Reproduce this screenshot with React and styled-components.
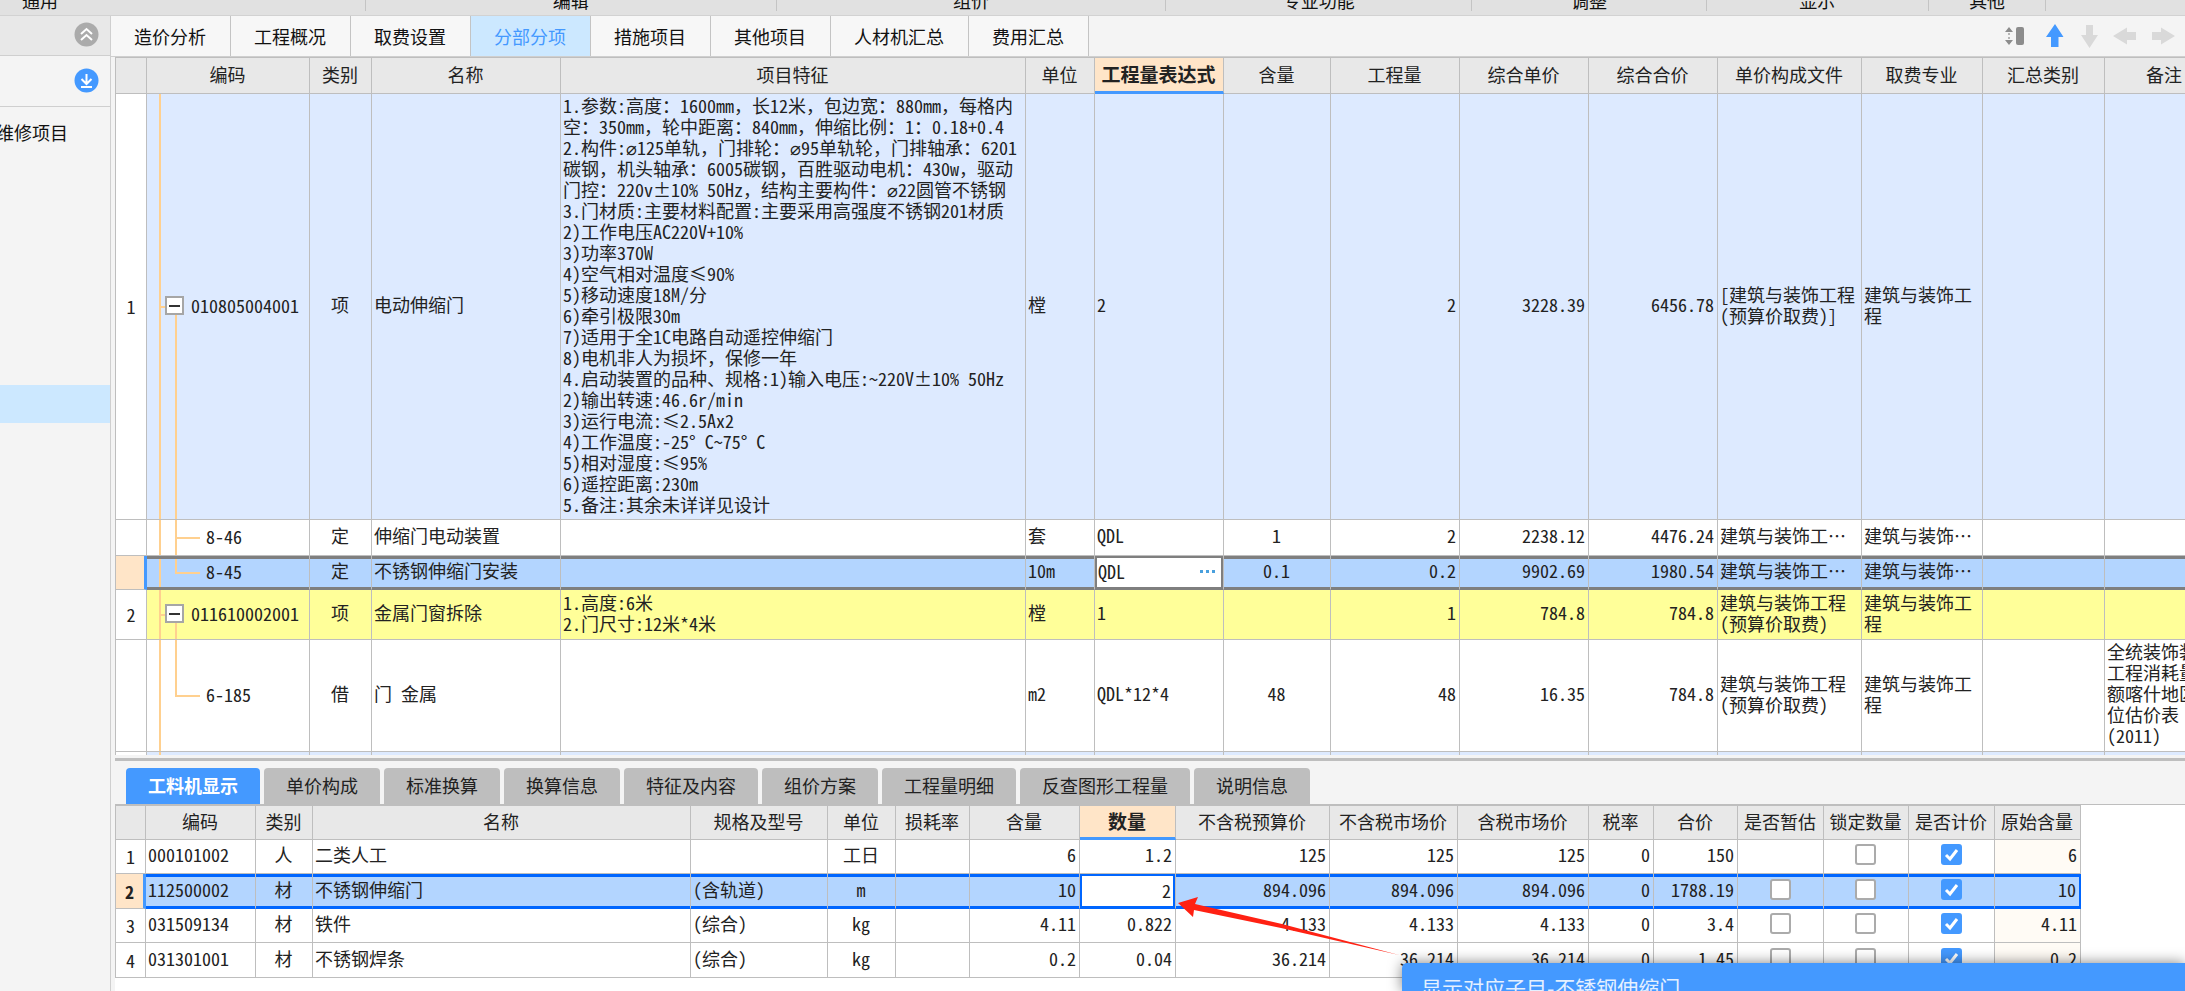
import React from "react";
import styled, { createGlobalStyle, css } from "styled-components";

const GlobalStyle = createGlobalStyle`
  * {
    box-sizing: border-box;
  }
  body {
    margin: 0;
    overflow: hidden;
    background: #f4f4f4;
    color: #222;
    font: 18px/21px "Noto Sans CJK SC", sans-serif;
  }
  button, input {
    font: inherit;
    color: inherit;
  }
`;

const Page = styled.div`
  display: flex;
  flex-direction: column;
  height: 100vh;
`;

const Ribbon = styled.div`
  flex: none;
  display: flex;
  height: 16px;
  overflow: hidden;
  background: #e1e1e1;
  border-bottom: 1px solid #d2d2d2;
`;

const RibbonGroup = styled.div`
  flex: ${(p) => p.$grow} 1 0;
  display: flex;
  align-items: flex-end;
  justify-content: ${(p) => (p.$first ? "flex-start" : "center")};
  min-width: 0;
  height: 11px;
  white-space: nowrap;
  color: #111;
  border-right: 1px solid #c4c4c4;
  &:last-child {
    border-right: none;
  }
  span {
    padding-left: ${(p) => (p.$first ? 22 : 0)}px;
  }
`;

const Body = styled.div`
  flex: 1;
  display: flex;
  min-height: 0;
`;

const Sidebar = styled.aside`
  flex: none;
  width: 111px;
  overflow: hidden;
  background: #f4f4f4;
  border-right: 1px solid #cfcfcf;
`;

const SideBar = styled.div`
  display: flex;
  align-items: center;
  justify-content: flex-end;
  height: ${(p) => (p.$head ? 40 : 51)}px;
  padding: 0 11px 2px 0;
  background: ${(p) => (p.$head ? "#e8e8e8" : "#f4f4f4")};
  border-bottom: 1px solid #cfcfcf;
`;

const RoundButton = styled.button`
  display: flex;
  padding: 0;
  border: none;
  background: none;
`;

const Tree = styled.ul`
  margin: 0;
  padding: 8px 0 0;
  list-style: none;
`;

const TreeItem = styled.li`
  height: 38px;
  line-height: 35px;
  margin-left: -4px;
  white-space: nowrap;
  color: #111;
  background: ${(p) => (p.$active ? "#cce8ff" : "none")};
  &:first-child {
    margin-bottom: 4px;
  }
`;

const Main = styled.main`
  flex: 1;
  display: flex;
  flex-direction: column;
  min-width: 0;
`;

const TopBar = styled.div`
  flex: none;
  display: flex;
  align-items: center;
  justify-content: space-between;
  height: 41px;
  padding-right: 10px;
  border-bottom: 1px solid #cfcfcf;
`;

const TabList = styled.nav`
  display: flex;
  height: 100%;
`;

const Tab = styled.button`
  padding: 0 24px 0 23px;
  border: none;
  border-right: 1px solid #c4c4c4;
  background: ${(p) => (p.$active ? "#cce8ff" : "#f7f7f7")};
  color: ${(p) => (p.$active ? "#49f" : "#111")};
`;

const Tools = styled.div`
  display: flex;
  align-items: center;
  gap: 14px;
`;

const ToolButton = styled.button`
  display: flex;
  padding: 0;
  border: none;
  background: none;
`;

const GridPane = styled.section`
  flex: 1;
  min-height: 0;
  margin: 0 0 3px 4px;
  overflow: hidden;
`;

const Grid = styled.table`
  table-layout: fixed;
  width: ${(p) => p.$width}px;
  border-collapse: separate;
  border-spacing: 0;
  border-left: 1px solid #bebebe;
  border-top: 1px solid #bebebe;
  font-feature-settings: "hwid";
`;

const Th = styled.th`
  height: ${(p) => p.$height}px;
  padding: 0 1px 3px 0;
  font-weight: 400;
  text-align: center;
  white-space: nowrap;
  background: #e8e8e8;
  border-right: 1px solid #bebebe;
  border-bottom: 1px solid #bebebe;
  ${(p) =>
    p.$active &&
    css`
      font-size: 19px;
      font-weight: 700;
      background: #ffe5c8;
      border-bottom: 3px solid #49f;
    `}
`;

const rowColors = {
  item: "#ddeaff",
  sub: "#fff",
  picked: "#b3d5ff",
  marked: "#ffff99",
};

const Td = styled.td`
  padding: 0 3px 4px 2px;
  overflow: hidden;
  text-align: ${(p) => p.$align || "left"};
  white-space: pre;
  background-color: inherit;
  border-right: 1px solid #bebebe;
  border-bottom: 1px solid #bebebe;
`;

const Tr = styled.tr`
  height: ${(p) => p.$height}px;
  background: ${(p) => rowColors[p.$kind]};
  ${(p) =>
    p.$ring &&
    css`
      ${Td} {
        box-shadow: inset 0 3px ${p.$ring}, inset 0 -2px ${p.$ring};
        border-bottom-color: ${p.$ring};
      }
      ${Td}:last-child {
        border-right: 2px solid ${p.$ring};
      }
    `}
`;

const Gutter = styled.th`
  padding: 0;
  font-weight: ${(p) => (p.$bold ? 700 : 400)};
  background: ${(p) => (p.$active ? "#ffe5c8" : "#fff")};
  border-right: ${(p) => (p.$active ? "3px solid #49f" : "1px solid #bebebe")};
  border-bottom: 1px solid #bebebe;
`;

const TextLine = styled.div`
  height: 21px;
`;

// full-width comma keeps its own width next to half-width digits
const Comma = styled.span`
  font-feature-settings: normal;
`;

const line = "linear-gradient(#ffd08f, #ffd08f) no-repeat";
const branch = {
  parent: `${line} 13px 50% / 5px 2px, ${line} 28px 100% / 2px 50%`,
  child: `${line} 28px 50% / 25px 2px, ${line} 28px 0 / 2px 100%`,
  last: `${line} 28px 50% / 25px 2px, ${line} 28px 0 / 2px 50%`,
};

const CodeTd = styled(Td)`
  padding-left: ${(p) => (p.$branch === "parent" ? 18 : 59)}px;
  padding-bottom: 2px;
  background: ${(p) => branch[p.$branch]}, ${line} 12px 0 / 2px 100%;
`;

const CodeBox = styled.div`
  display: flex;
  align-items: center;
  gap: 7px;
`;

const Toggle = styled.button`
  display: flex;
  align-items: center;
  justify-content: center;
  width: 19px;
  height: 19px;
  padding: 0;
  background: #fff;
  border: 2px solid #a6a6a6;
  &::before {
    content: "";
    width: 11px;
    height: 2px;
    background: #333;
  }
`;

const EditTd = styled(Td)`
  padding: 0;
`;

const Editor = styled.div`
  display: flex;
  align-items: center;
  height: ${(p) => p.$height}px;
  padding: 0 2px 2px 1px;
  background: #fff;
  border: 2px solid ${(p) => p.$ring};
`;

const EditInput = styled.input`
  flex: 1;
  min-width: 0;
  padding: 0;
  border: none;
  outline: none;
  background: none;
  font-feature-settings: "hwid";
  text-align: ${(p) => p.$align || "left"};
`;

const MoreButton = styled.button`
  display: flex;
  gap: 3px;
  padding: 4px;
  border: none;
  background: none;
  i {
    width: 3px;
    height: 3px;
    background: #49a0dd;
  }
`;

const DetailPane = styled.section`
  flex: none;
  display: flex;
  flex-direction: column;
  height: 233px;
  margin-left: 4px;
  border-top: 3px solid #bebebe;
`;

const DetailTabs = styled.nav`
  display: flex;
  gap: 4px;
  height: 43px;
  padding: 7px 0 0 11px;
`;

const DetailTab = styled.button`
  height: 36px;
  padding: 0 22px 2px;
  border: none;
  border-radius: 4px 4px 0 0;
  background: ${(p) => (p.$active ? "#49f" : "#bebebe")};
  color: ${(p) => (p.$active ? "#fff" : "#222")};
  font-weight: ${(p) => (p.$active ? 700 : 400)};
`;

const DetailGrid = styled.div`
  flex: 1;
  overflow: hidden;
  background: #fff;
  border-top: 1px solid #bebebe;
`;

const Check = styled.input`
  appearance: none;
  display: block;
  width: 21px;
  height: 21px;
  margin: 0 auto;
  background: #fff;
  border: 2px solid #ababab;
  border-radius: 3px;
  &:checked {
    border-color: #49f;
    background: #49f
      url("data:image/svg+xml,%3Csvg xmlns='http://www.w3.org/2000/svg' viewBox='0 0 17 17'%3E%3Cpath d='M3 9l4 4 7-9' fill='none' stroke='white' stroke-width='3'/%3E%3C/svg%3E");
  }
`;

const Popup = styled.div`
  position: fixed;
  right: 0;
  bottom: 0;
  left: 1402px;
  height: 28px;
  padding: 12px 19px 0;
  overflow: hidden;
  white-space: nowrap;
  font-size: 21px;
  line-height: 24px;
  color: #e4f0ff;
  background: #49f;
  border-top-left-radius: 5px;
`;

const PopupShade = styled.div`
  position: fixed;
  right: 0;
  bottom: 0;
  left: 1402px;
  height: 28px;
  border-top-left-radius: 5px;
  box-shadow: 0 0 14px rgba(0, 0, 0, 0.5);
`;

const Arrow = styled.svg`
  position: fixed;
  left: 1177px;
  bottom: 30px;
`;

const ribbonGroups = [
  ["通用", 366],
  ["编辑", 411],
  ["组价", 390],
  ["专业功能", 306],
  ["调整", 234],
  ["显示", 222],
  ["其他", 117],
  ["", 139],
];

const tabs = [
  "造价分析",
  "工程概况",
  "取费设置",
  "分部分项",
  "措施项目",
  "其他项目",
  "人材机汇总",
  "费用汇总",
];

const columns = [
  ["", 31],
  ["编码", 163],
  ["类别", 62],
  ["名称", 189],
  ["项目特征", 465],
  ["单位", 69],
  ["工程量表达式", 129],
  ["含量", 107],
  ["工程量", 129],
  ["综合单价", 129],
  ["综合合价", 129],
  ["单价构成文件", 144],
  ["取费专业", 121],
  ["汇总类别", 122],
  ["备注", 120],
];

const feature = `1.参数:高度：1600mm，长12米，包边宽：880mm，每格内
空：350mm，轮中距离：840mm，伸缩比例：1：0.18+0.4
2.构件:⌀125单轨，门排轮：⌀95单轨轮，门排轴承：6201
碳钢，机头轴承：6005碳钢，百胜驱动电机：430w，驱动
门控：220v±10% 50Hz，结构主要构件：⌀22圆管不锈钢
3.门材质:主要材料配置:主要采用高强度不锈钢201材质
2)工作电压AC220V+10%
3)功率370W
4)空气相对温度≤90%
5)移动速度18M/分
6)牵引极限30m
7)适用于全1C电路自动遥控伸缩门
8)电机非人为损坏，保修一年
4.启动装置的品种、规格:1)输入电压:~220V±10% 50Hz
2)输出转速:46.6r/min
3)运行电流:≤2.5Ax2
4)工作温度:-25° C~75° C
5)相对湿度:≤95%
6)遥控距离:230m
5.备注:其余未详详见设计`;

const rows = [
  {
    kind: "item",
    height: 426,
    branch: "parent",
    cells: ["1", "010805004001", "项", "电动伸缩门", feature, "樘", "2", "", "2", "3228.39", "6456.78", "[建筑与装饰工程\n(预算价取费)]", "建筑与装饰工\n程", "", ""],
  },
  {
    kind: "sub",
    height: 36,
    branch: "child",
    cells: ["", "8-46", "定", "伸缩门电动装置", "", "套", "QDL", "1", "2", "2238.12", "4476.24", "建筑与装饰工…", "建筑与装饰…", "", ""],
  },
  {
    kind: "picked",
    height: 34,
    branch: "last",
    cells: ["", "8-45", "定", "不锈钢伸缩门安装", "", "10m", "QDL", "0.1", "0.2", "9902.69", "1980.54", "建筑与装饰工…", "建筑与装饰…", "", ""],
  },
  {
    kind: "marked",
    height: 50,
    branch: "parent",
    cells: ["2", "011610002001", "项", "金属门窗拆除", "1.高度:6米\n2.门尺寸:12米*4米", "樘", "1", "", "1", "784.8", "784.8", "建筑与装饰工程\n(预算价取费)", "建筑与装饰工\n程", "", ""],
  },
  {
    kind: "sub",
    height: 112,
    branch: "last",
    cells: ["", "6-185", "借", "门 金属", "", "m2", "QDL*12*4", "48", "48", "16.35", "784.8", "建筑与装饰工程\n(预算价取费)", "建筑与装饰工\n程", "", "全统装饰装修\n工程消耗量定\n额喀什地区单\n位估价表\n(2011)"],
  },
  {
    kind: "item",
    height: 50,
    branch: "parent",
    cells: ["", "", "", "", "", "", "", "", "", "", "", "", "", "", ""],
  },
];

const aligns = { 2: "center", 7: "center", 8: "right", 9: "right", 10: "right" };

const detailTabs = [
  "工料机显示",
  "单价构成",
  "标准换算",
  "换算信息",
  "特征及内容",
  "组价方案",
  "工程量明细",
  "反查图形工程量",
  "说明信息",
];

const detailColumns = [
  ["", 30],
  ["编码", 110],
  ["类别", 57],
  ["名称", 378],
  ["规格及型号", 137],
  ["单位", 68],
  ["损耗率", 74],
  ["含量", 110],
  ["数量", 96],
  ["不含税预算价", 154],
  ["不含税市场价", 128],
  ["含税市场价", 131],
  ["税率", 65],
  ["合价", 84],
  ["是否暂估", 86],
  ["锁定数量", 85],
  ["是否计价", 86],
  ["原始含量", 86],
];

// booleans are drawn as tick boxes, null leaves the cell empty
const detailRows = [
  ["1", "000101002", "人", "二类人工", "", "工日", "", "6", "1.2", "125", "125", "125", "0", "150", null, false, true, "6"],
  ["2", "112500002", "材", "不锈钢伸缩门", "(含轨道)", "m", "", "10", "2", "894.096", "894.096", "894.096", "0", "1788.19", false, false, true, "10"],
  ["3", "031509134", "材", "铁件", "(综合)", "kg", "", "4.11", "0.822", "4.133", "4.133", "4.133", "0", "3.4", false, false, true, "4.11"],
  ["4", "031301001", "材", "不锈钢焊条", "(综合)", "kg", "", "0.2", "0.04", "36.214", "36.214", "36.214", "0", "1.45", false, false, true, "0.2"],
];

const OriginTd = styled(Td)`
  background-color: ${(p) => (p.$picked ? "inherit" : "#fffbf5")};
`;

const detailAlign = (index) => {
  if (index === 2 || index === 5) {
    return "center";
  }
  return index > 6 ? "right" : "left";
};

const sum = (list) => list.reduce((total, item) => total + item[1], 1);

const renderLine = (text) =>
  text
    .split(/(，)/)
    .map((part, index) =>
      part === "，" ? <Comma key={index}>{part}</Comma> : part
    );

const renderText = (text) => {
  if (!text.includes("\n")) {
    return text;
  }
  return text
    .split("\n")
    .map((item, index) => <TextLine key={index}>{renderLine(item)}</TextLine>);
};

function GridHead({ list, active, height }) {
  return (
    <>
      <colgroup>
        {list.map(([label, width], index) => (
          <col key={index} style={{ width }} />
        ))}
      </colgroup>
      <thead>
        <tr>
          {list.map(([label], index) => (
            <Th
              key={index}
              scope="col"
              $height={height}
              $active={label === active}
            >
              {label}
            </Th>
          ))}
        </tr>
      </thead>
    </>
  );
}

function ItemRow({ row }) {
  const picked = row.kind === "picked";
  return (
    <Tr $kind={row.kind} $height={row.height} $ring={picked && "#7f7f7f"}>
      {row.cells.map((text, index) => {
        if (index === 0) {
          return (
            <Gutter key={index} scope="row" $active={picked}>
              {text}
            </Gutter>
          );
        }
        if (index === 1) {
          return (
            <CodeTd key={index} $branch={row.branch}>
              <CodeBox>
                {row.branch === "parent" && <Toggle aria-label="折叠" />}
                {text}
              </CodeBox>
            </CodeTd>
          );
        }
        if (picked && index === 6) {
          return (
            <EditTd key={index}>
              <Editor $ring="#7f7f7f" $height={33}>
                <EditInput aria-label="工程量表达式" defaultValue={text} />
                <MoreButton aria-label="更多">
                  <i />
                  <i />
                  <i />
                </MoreButton>
              </Editor>
            </EditTd>
          );
        }
        return (
          <Td key={index} $align={aligns[index]}>
            {renderText(text)}
          </Td>
        );
      })}
    </Tr>
  );
}

function DetailRow({ cells, picked, height }) {
  return (
    <Tr
      $kind={picked ? "picked" : "sub"}
      $height={height}
      $ring={picked && "#06f"}
    >
      {cells.map((value, index) => {
        if (index === 0) {
          return (
            <Gutter key={index} scope="row" $active={picked} $bold={picked}>
              {value}
            </Gutter>
          );
        }
        if (typeof value === "boolean") {
          return (
            <Td key={index}>
              <Check
                type="checkbox"
                aria-label={detailColumns[index][0]}
                defaultChecked={value}
              />
            </Td>
          );
        }
        if (picked && index === 8) {
          return (
            <EditTd key={index}>
              <Editor $ring="#06f" $height={34}>
                <EditInput aria-label="数量" $align="right" defaultValue={value} />
              </Editor>
            </EditTd>
          );
        }
        const Cell = index === 17 ? OriginTd : Td;
        return (
          <Cell key={index} $align={detailAlign(index)} $picked={picked}>
            {value}
          </Cell>
        );
      })}
    </Tr>
  );
}

export default function App() {
  return (
    <Page lang="zh-CN">
      <GlobalStyle />
      <Ribbon>
        {ribbonGroups.map(([label, grow], index) => (
          <RibbonGroup key={index} $grow={grow} $first={index === 0}>
            <span>{label}</span>
          </RibbonGroup>
        ))}
      </Ribbon>
      <Body>
        <Sidebar>
          <SideBar $head>
            <RoundButton aria-label="收起">
              <svg width="25" height="25" viewBox="0 0 25 25">
                <circle cx="12.5" cy="12.5" r="12" fill="#ababab" />
                <path d="M7 12l5.5-5 5.5 5M7 18l5.5-5 5.5 5" fill="none" stroke="#fff" strokeWidth="2" />
              </svg>
            </RoundButton>
          </SideBar>
          <SideBar>
            <RoundButton aria-label="下载">
              <svg width="25" height="25" viewBox="0 0 25 25">
                <circle cx="12.5" cy="12.5" r="12" fill="#49f" />
                <path d="M12.5 6v10M7.5 11l5 5 5-5M7 19h11" fill="none" stroke="#fff" strokeWidth="2" />
              </svg>
            </RoundButton>
          </SideBar>
          <Tree>
            <TreeItem>维修项目</TreeItem>
            {[1, 2, 3, 4, 5, 6].map((n) => (
              <TreeItem key={n} />
            ))}
            <TreeItem $active />
          </Tree>
        </Sidebar>
        <Main>
          <TopBar>
            <TabList>
              {tabs.map((label) => (
                <Tab key={label} $active={label === "分部分项"}>
                  {label}
                </Tab>
              ))}
            </TabList>
            <Tools>
              <ToolButton aria-label="行高">
                <svg width="26" height="20" viewBox="0 0 26 20">
                  <path d="M0 6l4-5 4 5zM0 14l4 5 4-5z" fill="#8c8c8c" />
                  <path d="M3 7h2v2H3zM3 11h2v2H3z" fill="#b5b5b5" />
                  <rect x="11" y="1" width="8" height="18" rx="2" fill="#8c8c8c" />
                </svg>
              </ToolButton>
              <ToolButton aria-label="上移">
                <svg width="22" height="24" viewBox="0 0 22 24">
                  <path d="M10 0l8.500 13h-5v10H6V13H1z" fill="#49f" />
                </svg>
              </ToolButton>
              <ToolButton aria-label="下移">
                <svg width="18" height="24" viewBox="0 0 18 24">
                  <path d="M8.500 24l8.500-13h-5V1H5v10H0z" fill="#d9d9d9" />
                </svg>
              </ToolButton>
              <ToolButton aria-label="升级">
                <svg width="24" height="18" viewBox="0 0 24 18">
                  <path d="M0 9l14-8.500v4.500h9v8h-9v4.500z" fill="#d9d9d9" />
                </svg>
              </ToolButton>
              <ToolButton aria-label="降级">
                <svg width="24" height="18" viewBox="0 0 24 18">
                  <path d="M24 9L10 .5V5H1v8h9v4.500z" fill="#d9d9d9" />
                </svg>
              </ToolButton>
            </Tools>
          </TopBar>
          <GridPane>
            <Grid $width={sum(columns)}>
              <GridHead list={columns} active="工程量表达式" height={36} />
              <tbody>
                {rows.map((row, index) => (
                  <ItemRow key={index} row={row} />
                ))}
              </tbody>
            </Grid>
          </GridPane>
          <DetailPane>
            <DetailTabs>
              {detailTabs.map((label, index) => (
                <DetailTab key={label} $active={index === 0}>
                  {label}
                </DetailTab>
              ))}
            </DetailTabs>
            <DetailGrid>
              <Grid $width={sum(detailColumns)}>
                <GridHead list={detailColumns} active="数量" height={34} />
                <tbody>
                  {detailRows.map((cells, index) => (
                    <DetailRow
                      key={index}
                      cells={cells}
                      height={index % 2 ? 35 : 34}
                      picked={index === 1}
                    />
                  ))}
                </tbody>
              </Grid>
            </DetailGrid>
          </DetailPane>
        </Main>
      </Body>
      <PopupShade />
      <Arrow width="224" height="64" viewBox="0 0 224 64">
        <path d="M1 6L21 0 18 7 105 27 222 58 104 31 17 13 16 20z" fill="#ff2113" />
      </Arrow>
      <Popup>显示对应子目-不锈钢伸缩门</Popup>
    </Page>
  );
}
